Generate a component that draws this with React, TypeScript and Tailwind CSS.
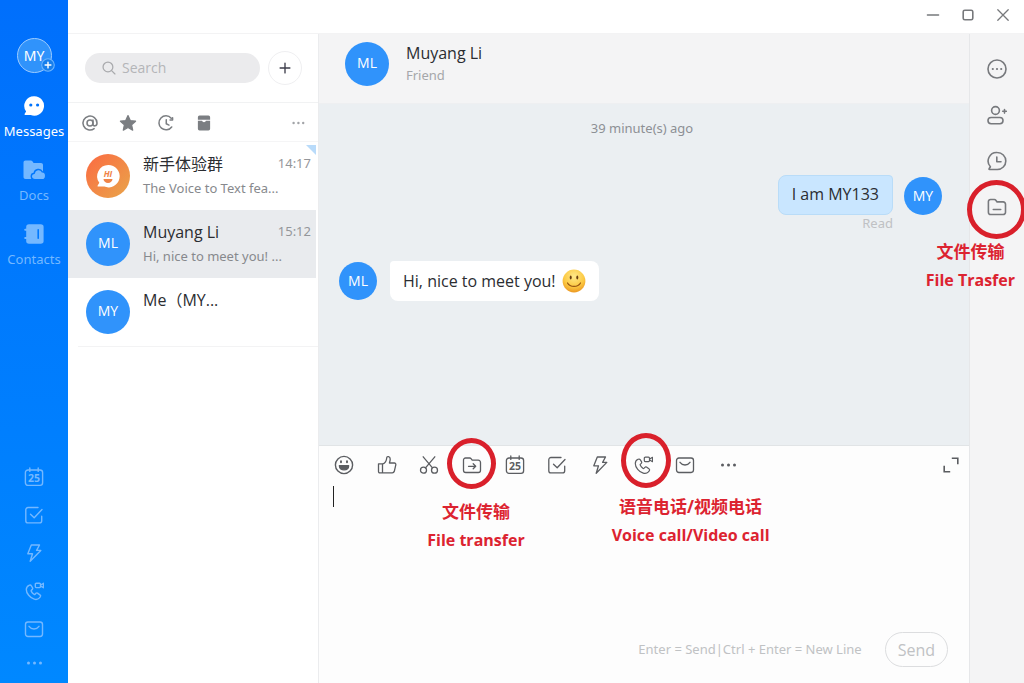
import React, { useState } from 'react';

const svgProps = {
    viewBox: '0 0 20 20',
    fill: 'none',
    stroke: 'currentColor',
    strokeLinecap: 'round' as const,
    strokeLinejoin: 'round' as const,
};

type IconProps = { className?: string; weight?: number };

const Svg = ({ className = 'size-5', weight = 1.4, children }: IconProps & { children: React.ReactNode }) => (
    <svg {...svgProps} strokeWidth={weight} className={className} aria-hidden="true">{children}</svg>
);

const CalendarIcon = (p: IconProps) => (
    <Svg {...p}>
        <path d="M4 3h12a2.6 2.6 0 0 1 2.6 2.6v10.2a2.6 2.6 0 0 1-2.6 2.6H4a2.6 2.6 0 0 1-2.6-2.6V5.6A2.6 2.6 0 0 1 4 3z" />
        <path d="M5.8 1v3.4M14.2 1v3.4" />
        <text x="10" y="14.8" textAnchor="middle" fontSize="10.5" fontWeight="700" fill="currentColor" stroke="none">25</text>
    </Svg>
);

const TaskIcon = (p: IconProps) => (
    <Svg {...p}>
        <path d="M14 2.5H4A2.2 2.2 0 0 0 1.8 4.700v11A2.2 2.2 0 0 0 4 17.900h11.500a2.2 2.2 0 0 0 2.2-2.2v-4.500" />
        <path d="M6.500 9.200l3.700 3.600L18 4.500" />
    </Svg>
);

const BoltIcon = (p: IconProps) => (
    <Svg {...p}>
        <path d="M7.300 2h8.200l-2.900 5.400h4.200L6.200 18.300l2.300-7.500H3.800z" />
    </Svg>
);

const CallIcon = (p: IconProps) => (
    <Svg {...p}>
        <path d="M5 4.300c-3.600 1.600-3.500 6.200-.3 10 3.200 3.900 8 5.600 10.700 2.600l1-1.300c.4-.6.300-1.100-.2-1.500l-2.700-2c-.6-.4-1.100-.3-1.600.2l-.8.900c-.4.400-.8.400-1.200.100-1-.8-2-1.900-2.600-3-.3-.5-.2-.9.200-1.200l.8-.7c.5-.5.600-1 .3-1.600L7.200 4.700c-.4-.7-1.200-.8-2.200-.4z" />
        <path d="M12.300 2.200h3.200a1 1 0 0 1 1 1v2.400a1 1 0 0 1-1 1h-3.200a1 1 0 0 1-1-1V3.200a1 1 0 0 1 1-1zM16.700 4l2.800-1.700v4.400l-2.800-1.600" />
    </Svg>
);

const MailIcon = (p: IconProps) => (
    <Svg {...p}>
        <rect x="1.500" y="3" width="17" height="14.500" rx="2.400" />
        <path d="M5 7.300c2.600 3.600 7.400 3.600 10 0" />
    </Svg>
);

const DotsIcon = ({ className = 'size-5' }: IconProps) => (
    <svg viewBox="0 0 20 20" fill="currentColor" className={className} aria-hidden="true">
        <circle cx="4.500" cy="10" r="1.500" /><circle cx="10.500" cy="10" r="1.500" /><circle cx="16.500" cy="10" r="1.500" />
    </svg>
);

const ChatBubbleIcon = () => (
    <svg viewBox="0 0 24 24" className="size-6" aria-hidden="true">
        <path d="M12.500 2.200a9.700 9.700 0 1 1-3.800 18.700H3.200c-.7 0-.9-.6-.5-1.100l1.400-2.300A9.700 9.700 0 0 1 12.500 2.200z" fill="#fff" />
        <circle cx="8.800" cy="11" r="1.600" fill="#0073fd" /><circle cx="15.600" cy="11" r="1.600" fill="#0073fd" />
    </svg>
);

const DocsIcon = () => (
    <svg viewBox="0 0 24 24" className="size-6" fill="currentColor" aria-hidden="true">
        <path d="M3.500 2.500h5.300c.7 0 1.200.3 1.600.8l1.200 1.700h7.400c1.200 0 2 .8 2 2v14H3.500c-1.200 0-2-.8-2-2V4.500c0-1.200.8-2 2-2z" />
        <path d="M13 21.800c-4.600 0-5-6.100-.8-6.600.6-4.300 6.400-5 8-1.500 4.600-.2 4.600 8.100 0 8.100z" stroke="#0077fd" strokeWidth="1.400" />
    </svg>
);

const ContactsIcon = () => (
    <svg viewBox="0 0 24 24" className="size-6" aria-hidden="true">
        <path d="M7 2.200h11.800a2.800 2.800 0 0 1 2.800 2.800v14a2.800 2.800 0 0 1-2.800 2.800H7A2.800 2.800 0 0 1 4.200 19V5A2.800 2.800 0 0 1 7 2.200z" fill="currentColor" />
        <path d="M3.200 7.800h2.600M3.200 16h2.600" stroke="currentColor" strokeWidth="2" strokeLinecap="round" />
        <path d="M16.200 7.800v8.400" stroke="#0078fe" strokeWidth="1.600" strokeLinecap="round" />
    </svg>
);

const GroupAvatar = () => (
    <svg viewBox="0 0 44 44" className="size-11 shrink-0" aria-hidden="true">
        <defs>
            <linearGradient id="groupFill" x1="0" y1="0" x2="1" y2="1">
                <stop offset="0" stopColor="#fb6a42" /><stop offset="1" stopColor="#e9a54a" />
            </linearGradient>
        </defs>
        <circle cx="22" cy="22" r="22" fill="url(#groupFill)" />
        <path d="M22.300 11a11.200 11.200 0 1 1-4 21.600h-6c-.8 0-1-.6-.6-1.200l1.600-2.600A11.200 11.200 0 0 1 22.300 11z" fill="#fff" />
        <text x="22" y="22.500" textAnchor="middle" fontSize="8.500" fontWeight="700" fontStyle="italic" fill="#f08447">HI</text>
        <path d="M17.500 25h9a4.500 4 0 0 1-9 0z" fill="#f08447" />
    </svg>
);

const Smiley = () => (
    <svg viewBox="0 0 24 24" className="size-6" role="img" aria-label="smile">
        <defs>
            <radialGradient id="smileFill" cx=".5" cy=".3" r=".75">
                <stop offset="0" stopColor="#ffe98a" /><stop offset=".6" stopColor="#fcc942" /><stop offset="1" stopColor="#e98f1c" />
            </radialGradient>
        </defs>
        <circle cx="12" cy="12" r="11.400" fill="url(#smileFill)" />
        <ellipse cx="8.700" cy="8.500" rx="1" ry="1.900" fill="#6b3f10" /><ellipse cx="15.300" cy="8.500" rx="1" ry="1.900" fill="#6b3f10" />
        <path d="M5.500 14c2.500 4.600 10.500 4.600 13 0" fill="none" stroke="#9a5714" strokeWidth="1.200" strokeLinecap="round" />
    </svg>
);

const Avatar = ({ text, small }: { text: string; small?: boolean }) => (
    <span className={`flex shrink-0 items-center justify-center rounded-full bg-[#3093fb] pb-px text-sm text-white ${small ? 'size-[38px]' : 'size-11'}`}>{text}</span>
);

// red ring plus caption laid over a tool button
const Callout = ({ zh, en, ring, caption }: { zh: string; en: string; ring: string; caption: string }) => (
    <>
        <span className={`pointer-events-none absolute z-10 rounded-[50%] border-[5px] border-[#d9202b] ${ring}`} />
        <span className={`pointer-events-none absolute z-10 text-center font-bold whitespace-nowrap text-[#dc2330] ${caption}`}>
            <span className="block text-[17px] leading-7">{zh}</span>
            <span className="block text-base leading-7">{en}</span>
        </span>
    </>
);

const navItems = [
    { label: 'Messages', icon: <ChatBubbleIcon /> },
    { label: 'Docs', icon: <DocsIcon /> },
    { label: 'Contacts', icon: <ContactsIcon /> },
];

const shortcuts = [
    { label: 'Calendar', Icon: CalendarIcon },
    { label: 'Tasks', Icon: TaskIcon },
    { label: 'Quick', Icon: BoltIcon },
    { label: 'Calls', Icon: CallIcon },
    { label: 'Mail', Icon: MailIcon },
];

const chats = [
    { id: 'group', name: '新手体验群', preview: 'The Voice to Text fea...', time: '14:17', avatar: '' },
    { id: 'ml', name: 'Muyang Li', preview: 'Hi, nice to meet you! ...', time: '15:12', avatar: 'ML' },
    { id: 'me', name: 'Me（MY...', preview: '', time: '', avatar: 'MY' },
];

const tools = [
    { label: 'Emoji', icon: <Svg weight={1.4}><circle cx="10" cy="10" r="8.600" /><path d="M5.400 10.800h9.200c0 5.400-9.200 5.400-9.200 0z" fill="currentColor" /><path d="M7 6.300v1M13 6.300v1" strokeWidth="1.900" /></Svg> },
    { label: 'Like', icon: <Svg weight={1.3}><path d="M1.500 8.800h4v9h-2.800a1.200 1.200 0 0 1-1.200-1.200zM5.500 9.200c2.700-1 4-3.400 4.200-6.200.1-2.200 3.500-1.900 3.500 1 0 1.500-.3 2.700-.8 4h5c1 0 1.600.8 1.400 1.800l-1.500 6.500c-.3 1-1 1.500-2 1.500H5.500" /></Svg> },
    { label: 'Screenshot', icon: <Svg weight={1.3}><circle cx="4.500" cy="15.200" r="3" /><circle cx="15.500" cy="15.200" r="3" /><path d="M6.500 12.800L15.800 1.800M13.500 12.800L4.200 1.800" /></Svg> },
    { label: 'File transfer', icon: <Svg weight={1.3}><path d="M3.500 3h4.200c.6 0 1 .2 1.300.6l1.200 1.600h6.100a2.200 2.200 0 0 1 2.200 2.200v7.900a2.200 2.200 0 0 1-2.200 2.200H3.700a2.200 2.200 0 0 1-2.200-2.200V5a2 2 0 0 1 2-2z" /><path d="M6.500 11.300h7M11.200 8.800l2.500 2.500-2.500 2.500" /></Svg> },
    { label: 'Calendar', icon: <CalendarIcon weight={1.3} /> },
    { label: 'Task', icon: <TaskIcon weight={1.3} /> },
    { label: 'Quick', icon: <BoltIcon weight={1.3} /> },
    { label: 'Voice call', icon: <CallIcon weight={1.2} /> },
    { label: 'Mail', icon: <MailIcon weight={1.3} /> },
    { label: 'More', icon: <DotsIcon /> },
];

const railItems = [
    { label: 'More', icon: <Svg weight={1.6}><circle cx="10" cy="10" r="9" /><path d="M5.800 10h.01M10 10h.01M14.200 10h.01" strokeWidth="2.200" /></Svg> },
    { label: 'Add friend', icon: <Svg weight={1.6}><circle cx="8.500" cy="5.500" r="3.900" /><rect x="1" y="12.500" width="15" height="6.200" rx="3.100" /><path d="M17.500 4.500v3.600M15.700 6.300h3.600" /></Svg> },
    { label: 'History', icon: <Svg weight={1.6}><path d="M10.300 1.500a8.500 8.500 0 1 1 0 17H2.500c-.5 0-.7-.4-.4-.8l1.300-2A8.500 8.500 0 0 1 10.300 1.500z" /><path d="M9.800 6v4.800h4.200" /></Svg> },
    { label: 'Files', icon: <Svg weight={1.6}><path d="M3.500 2.500h3.900c.6 0 1.100.3 1.400.7l1.300 1.700h6.100a2.300 2.300 0 0 1 2.300 2.300v8a2.300 2.300 0 0 1-2.300 2.300H3.700a2.300 2.300 0 0 1-2.300-2.300V4.600c0-1.200.9-2.100 2.100-2.100z" /><path d="M6.300 12.500h7.400" /></Svg> },
];

const filters = [
    { label: 'Mentions', icon: <Svg weight={1.7}><circle cx="10" cy="10" r="3.300" /><path d="M13.300 6.700v4.500c0 3 4.500 2.600 4.500-1.200a7.800 7.800 0 1 0-3.200 6.300" /></Svg> },
    { label: 'Starred', icon: <Svg><path d="M10 1.800l2.500 5.500 5.900.7-4.400 4 1.200 5.900L10 15l-5.200 2.900L6 12 1.600 8l5.900-.7z" fill="currentColor" /></Svg> },
    { label: 'Recent', icon: <Svg weight={1.7}><path d="M15.800 4.600a7.800 7.800 0 1 0 .5 9.800M17.300 4.200v2.500h-2.800M10.300 6.500v4.300l3 1.500" /></Svg> },
    { label: 'Archived', icon: <svg viewBox="0 0 20 20" fill="currentColor" className="size-5" aria-hidden="true"><path d="M5 1.800h10a1.800 1.800 0 0 1 1.800 1.800v2.800H3.200V3.600A1.800 1.800 0 0 1 5 1.800zM3.200 7.500h4.600a2.300 2.300 0 0 0 4.400 0h4.600v8.900a1.800 1.800 0 0 1-1.800 1.800H5a1.800 1.800 0 0 1-1.800-1.800z" /></svg> },
];

export default function App() {
    const [activeChat, setActiveChat] = useState('ml');
    const [draft, setDraft] = useState('');
    const [query, setQuery] = useState('');

    return (
        <div className="flex min-h-screen overflow-hidden bg-white font-['Open_Sans','Noto_Sans_CJK_SC',sans-serif] text-[#2b2d31]">
            <nav className="flex w-[68px] shrink-0 flex-col items-center bg-linear-to-b from-[#006ffc] to-[#0088ff] pt-[38px] pb-[14px] font-['Noto_Sans',sans-serif] text-[#74b8ff]">
                <button aria-label="My profile" className="relative mb-[21px] flex size-[35px] items-center justify-center rounded-full border border-[#9dccff] bg-[#3093fb] text-sm text-white">
                    MY
                    <svg viewBox="0 0 12 12" className="absolute -right-1 bottom-0 size-3.5" aria-hidden="true">
                        <circle cx="6" cy="6" r="5.400" fill="#187fec" stroke="#6db5ff" strokeWidth=".9" />
                        <path d="M6 3.500v5M3.500 6h5" stroke="#fff" strokeWidth="1.200" strokeLinecap="round" />
                    </svg>
                </button>
                <div className="flex flex-col gap-[18px]">
                    {navItems.map((item, i) => (
                        <button key={item.label} className={`flex flex-col items-center gap-1 text-[13px] leading-[18px] ${i === 0 ? 'text-white' : ''}`}>
                            {item.icon}
                            {item.label}
                        </button>
                    ))}
                </div>
                <div className="mt-auto flex flex-col items-center gap-[18px]">
                    {shortcuts.map(({ label, Icon }) => (
                        <button key={label} aria-label={label}><Icon /></button>
                    ))}
                    <button aria-label="More" className="flex h-3 items-center"><DotsIcon /></button>
                </div>
            </nav>

            <div className="flex min-w-0 flex-1 flex-col">
                <header className="flex h-[34px] shrink-0 items-center justify-end gap-[19px] border-b border-[#f3f3f4] pr-[13px] pb-1 text-[#77797c]">
                    <button aria-label="Minimize"><Svg className="size-4" weight={1.8}><path d="M3 10h14" /></Svg></button>
                    <button aria-label="Maximize"><Svg className="size-4" weight={2}><rect x="4" y="4" width="12" height="12" rx="2" /></Svg></button>
                    <button aria-label="Close"><Svg className="size-4" weight={1.6}><path d="M3.500 3.500l13 13M16.500 3.500l-13 13" /></Svg></button>
                </header>

                <div className="flex min-h-0 flex-1">
                    <section className="w-[251px] shrink-0 border-r border-[#ebecee]">
                        <div className="flex h-[69px] items-center gap-2 border-b border-[#f1f2f3] pr-4 pl-[17px]">
                            <label className="flex h-[30px] min-w-0 flex-1 items-center gap-1.5 rounded-full bg-[#ebebed] pl-[17px] text-[#a9aaad]">
                                <Svg className="size-3.5 shrink-0" weight={1.8}><circle cx="8.500" cy="8.500" r="7" /><path d="M13.700 13.700l4.800 4.800" /></Svg>
                                <input type="search" aria-label="Search" placeholder="Search" value={query} onChange={(e) => setQuery(e.target.value)}
                                    className="w-full min-w-0 bg-transparent text-sm outline-none placeholder:text-[#b4b5b8]" />
                            </label>
                            <button aria-label="New chat" className="flex size-[34px] shrink-0 items-center justify-center rounded-full border border-[#efeff1] text-[#3d3d4a]">
                                <Svg className="size-3.5" weight={1.9}><path d="M10 3v14M3 10h14" /></Svg>
                            </button>
                        </div>
                        <div className="flex h-[39px] items-center gap-[18px] border-b border-[#f5f5f6] pt-0.5 pr-3 pl-3 text-[#7b7e82]">
                            {filters.map((f) => (
                                <button key={f.label} aria-label={f.label} className="px-px [&>svg]:size-[18px]">{f.icon}</button>
                            ))}
                            <button aria-label="More filters" className="ml-auto text-[#a2a4a8]"><DotsIcon className="size-4" /></button>
                        </div>
                        <ul>
                            {chats.map((c) => (
                                <li key={c.id} className="relative">
                                    <button onClick={() => setActiveChat(c.id)}
                                        className={`flex h-[68px] w-[248px] items-center gap-[13px] pr-[5px] pb-px pl-[18px] text-left ${activeChat === c.id ? 'bg-[#e9ebee]' : ''}`}>
                                        {c.avatar ? <Avatar text={c.avatar} /> : <GroupAvatar />}
                                        <span className="h-12 min-w-0 flex-1">
                                            <span className="flex items-center justify-between">
                                                <span className="text-base leading-6">{c.name}</span>
                                                <span className="font-['Noto_Sans',sans-serif] text-[13px] text-[#94969a]">{c.time}</span>
                                            </span>
                                            <span className="block font-['Noto_Sans',sans-serif] text-[13px] leading-6 whitespace-nowrap text-[#87898d]">{c.preview}</span>
                                        </span>
                                    </button>
                                    {c.id === 'group' && (
                                        <svg viewBox="0 0 10 10" className="absolute top-[3px] right-[2px] size-2.5" aria-hidden="true"><path d="M0 0h10v10z" fill="#b9dbfa" /></svg>
                                    )}
                                </li>
                            ))}
                        </ul>
                        <hr className="ml-2.5 border-[#f3f3f4]" />
                    </section>

                    <main className="flex min-w-0 flex-1 flex-col">
                        <div className="flex h-[70px] shrink-0 items-center gap-[17px] border-b border-[#eeeff1] bg-[#f4f4f5] pb-2.5 pl-[26px]">
                            <Avatar text="ML" />
                            <div className="pb-0.5">
                                <h1 className="text-base leading-6">Muyang Li</h1>
                                <p className="font-['Noto_Sans',sans-serif] text-[13px] leading-5 text-[#a5a7aa]">Friend</p>
                            </div>
                        </div>

                        <div className="flex flex-1 flex-col bg-[#ebeff2] px-5 pt-[14px]">
                            <p className="pr-1 text-center font-['Noto_Sans',sans-serif] text-[13px] leading-5 text-[#8d9095]">39 minute(s) ago</p>
                            <div className="mt-[37px] flex items-center justify-end gap-[11px] pr-[7px]">
                                <div>
                                    <p className="rounded-lg rounded-tr-sm border border-[#b9dcf8] bg-[#c9e6ff] px-[13px] pt-[6px] pb-2 text-base leading-6">I am MY133</p>
                                    <p className="text-right font-['Noto_Sans',sans-serif] text-[13px] leading-4 text-[#bfc1c4]">Read</p>
                                </div>
                                <div className="pb-[14px]"><Avatar text="MY" small /></div>
                            </div>
                            <div className="mt-[30px] flex items-center gap-[13px]">
                                <Avatar text="ML" small />
                                <p className="flex items-center gap-1.5 rounded-lg rounded-tl-sm bg-white px-[13px] py-2 text-base leading-6">Hi, nice to meet you! <Smiley /></p>
                            </div>
                        </div>

                        <div className="flex h-[238px] shrink-0 flex-col border-t border-[#e1e4e6] bg-[#fdfdfd]">
                            <div className="flex items-center pt-[9px] pr-[10px] pl-[15px] text-[#5b5d61]">
                                <div className="flex w-[404px] shrink-0 justify-between">
                                    {tools.map((t) => (
                                        <div key={t.label} className="relative size-5">
                                            <button aria-label={t.label}>{t.icon}</button>
                                            {t.label === 'File transfer' && <Callout zh="文件传输" en="File transfer" ring="-top-[17px] -left-[15px] h-[51px] w-[49px]" caption="top-[43px] left-[14px] -translate-x-1/2" />}
                                            {t.label === 'Voice call' && <Callout zh="语音电话/视频电话" en="Voice call/Video call" ring="-top-[22px] -left-[12px] h-[55px] w-[50px]" caption="top-[38px] left-[58px] -translate-x-1/2" />}
                                        </div>
                                    ))}
                                </div>
                                <button aria-label="Expand editor" className="ml-auto"><Svg className="size-4" weight={2}><path d="M12 1.500h6.500V8M1.500 12v6.500H8" strokeLinecap="square" strokeLinejoin="miter" /></Svg></button>
                            </div>
                            <div className="flex flex-1 pt-[11px] pl-[14px]">
                                <span className="h-[21px] w-px bg-[#222]" />
                                <textarea aria-label="Message" value={draft} onChange={(e) => setDraft(e.target.value)} className="flex-1 resize-none bg-transparent text-base outline-none" />
                            </div>
                            <div className="flex items-center justify-end gap-[23px] pr-[21px] pb-4 text-[#c0c2c4]">
                                <span className="font-['Noto_Sans',sans-serif] text-[13px]">Enter = Send|Ctrl + Enter = New Line</span>
                                <button className="h-[35px] rounded-full border border-[#dcdddf] px-3 text-base">Send</button>
                            </div>
                        </div>
                    </main>

                    <aside className="flex w-[55px] shrink-0 flex-col items-center gap-[26px] border-l border-[#e6e7e9] bg-[#f4f4f5] pt-[25px] text-[#77797d]">
                        {railItems.map((r) => (
                            <div key={r.label} className="relative size-5">
                                <button aria-label={r.label}>{r.icon}</button>
                                {r.label === 'Files' && <Callout zh="文件传输" en="File Trasfer" ring="-top-[17px] -left-[20px] size-[59px]" caption="top-[41px] -right-2" />}
                            </div>
                        ))}
                    </aside>
                </div>
            </div>
        </div>
    );
}
